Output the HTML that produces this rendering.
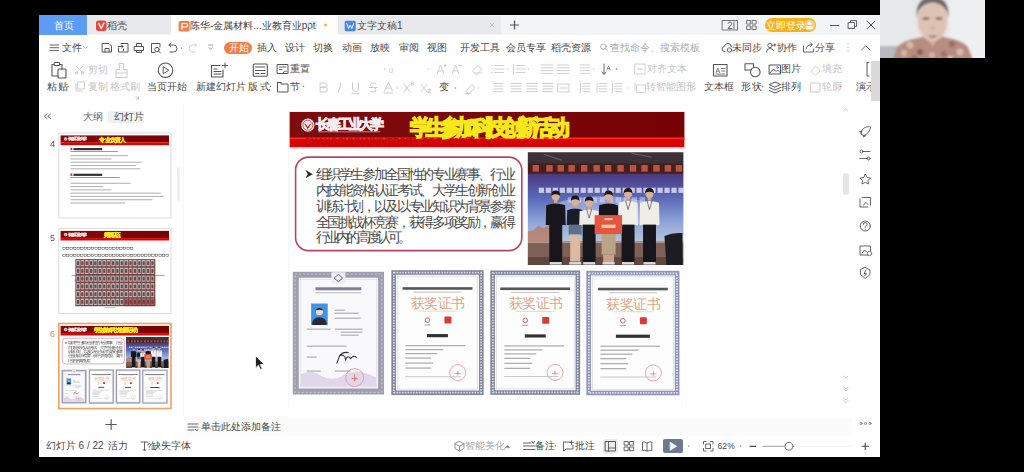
<!DOCTYPE html>
<html><head><meta charset="utf-8">
<style>
*{margin:0;padding:0;box-sizing:border-box}
html,body{width:1024px;height:472px;overflow:hidden;background:#000}
body{position:relative;font-family:"Liberation Sans",sans-serif;color:#444}
.a{position:absolute}
.t{position:absolute;white-space:nowrap;text-align:justify;text-align-last:justify;line-height:1}
body>div>svg,.tsvg{position:absolute;left:0;top:0;overflow:visible}
</style></head><body><div id="root" class="a" style="left:0;top:0;width:1024px;height:472px;filter:blur(0.6px)">

<div class="a" style="left:880px;top:0;width:105px;height:58px;background:#eceef0;overflow:hidden">
<svg width="105" height="58" viewBox="0 0 105 58">
<defs><filter id="bl" x="-20%" y="-20%" width="140%" height="140%"><feGaussianBlur stdDeviation="1.3"/></filter></defs>
<g filter="url(#bl)">
<rect x="-5" y="-5" width="115" height="68" fill="#e6e8ea"/>
<rect x="70" y="-5" width="40" height="68" fill="#eff0f1"/>
<rect x="-5" y="46" width="28" height="20" fill="#b7bbc0"/>
<rect x="45" y="33" width="15" height="14" fill="#d2ab9c"/>
<path d="M12 62 L17 47 Q24 40 38 38 L45 36 L52.5 47 L60 36 L68 38 Q82 40 88 47 L94 62 Z" fill="#b78d80"/>
<g fill-opacity="0.9">
<circle cx="30" cy="45" r="3.2" fill="#dcc0b0"/><circle cx="40" cy="52" r="3" fill="#8a5a50"/><circle cx="24" cy="53" r="3" fill="#d9bba8"/>
<circle cx="72" cy="44" r="3" fill="#9a6658"/><circle cx="80" cy="52" r="3.4" fill="#dcc1b2"/><circle cx="64" cy="54" r="3" fill="#a36a5c"/>
<circle cx="52" cy="55" r="3" fill="#d7b7a4"/><circle cx="34" cy="58" r="3" fill="#a06c60"/><circle cx="70" cy="58" r="2.5" fill="#e0c8bb"/>
</g>
<ellipse cx="52.5" cy="20" rx="15" ry="21.5" fill="#dec3b5"/>
<path d="M36.5 18 Q35 -3 52.5 -3 Q70 -3 68.5 18 Q67 4 52.5 2.5 Q38 4 36.5 18Z" fill="#716b69"/>
<ellipse cx="46" cy="18.5" rx="3.6" ry="1.3" fill="#77625c"/>
<ellipse cx="59" cy="18.5" rx="3.6" ry="1.3" fill="#77625c"/>
<ellipse cx="52.5" cy="28" rx="2.5" ry="1.5" fill="#d0a898"/>
<ellipse cx="52.5" cy="36.5" rx="4.2" ry="1.4" fill="#b88279"/>
</g></svg></div>

<div class="a" style="left:39px;top:15px;width:841px;height:442px;background:#fff;"></div>
<div class="a" style="left:39px;top:15px;width:841px;height:20px;background:#f3f4f7;"></div>
<div class="a" style="left:39px;top:15px;width:48px;height:20px;background:#5c9cf6;"></div>
<div class="a" style="left:87px;top:15px;width:84px;height:19px;background:#e8e9ec;"></div>
<div class="a" style="left:171px;top:15px;width:167px;height:20px;background:#fff;"></div>
<div class="a" style="left:338px;top:16px;width:163px;height:18px;background:#e8e9ec;"></div>
<div class="t" style="left:54.0px;top:21.2px;width:18.0px;font-size:10px;color:#fff;font-weight:normal;">首页</div>
<div class="t" style="left:107.0px;top:21.2px;width:19.0px;font-size:10px;color:#484848;font-weight:normal;">稻壳</div>
<div class="t" style="left:190.0px;top:21.2px;width:106.0px;font-size:10px;color:#444;font-weight:normal;">陈华-金属材料...业教育业ppt</div>
<div class="t" style="left:357.0px;top:21.2px;width:38.0px;font-size:10px;color:#484848;font-weight:normal;">文字文稿1</div>
<div class="a" style="left:764.5px;top:17.8px;width:51.5px;height:14.6px;background:#f6b21b;border-radius:8px"></div>
<div class="t" style="left:766.0px;top:21.2px;width:33.0px;font-size:10px;color:#fff;font-weight:normal;">立即登录</div>
<div class="t" style="left:62.4px;top:43.2px;width:17.6px;font-size:10px;color:#444;font-weight:normal;">文件</div>
<div class="a" style="left:224px;top:41.5px;width:28px;height:12.5px;background:#ef7f48;border-radius:6.5px"></div>
<div class="t" style="left:229.0px;top:43.2px;width:19.0px;font-size:10px;color:#fff;font-weight:normal;">开始</div>
<div class="t" style="left:257.0px;top:43.2px;width:19.0px;font-size:10px;color:#484848;font-weight:normal;">插入</div>
<div class="t" style="left:285.0px;top:43.2px;width:19.0px;font-size:10px;color:#484848;font-weight:normal;">设计</div>
<div class="t" style="left:313.0px;top:43.2px;width:19.0px;font-size:10px;color:#484848;font-weight:normal;">切换</div>
<div class="t" style="left:342.0px;top:43.2px;width:19.0px;font-size:10px;color:#484848;font-weight:normal;">动画</div>
<div class="t" style="left:370.0px;top:43.2px;width:19.0px;font-size:10px;color:#484848;font-weight:normal;">放映</div>
<div class="t" style="left:399.0px;top:43.2px;width:19.0px;font-size:10px;color:#484848;font-weight:normal;">审阅</div>
<div class="t" style="left:427.0px;top:43.2px;width:19.0px;font-size:10px;color:#484848;font-weight:normal;">视图</div>
<div class="t" style="left:459.7px;top:43.2px;width:33.3px;font-size:10px;color:#484848;font-weight:normal;">开发工具</div>
<div class="t" style="left:506.0px;top:43.2px;width:33.6px;font-size:10px;color:#484848;font-weight:normal;">会员专享</div>
<div class="t" style="left:550.5px;top:43.2px;width:34.0px;font-size:10px;color:#484848;font-weight:normal;">稻壳资源</div>
<div class="t" style="left:610.0px;top:43.2px;width:75.0px;font-size:10px;color:#aaa;font-weight:normal;">查找命令、搜索模板</div>
<div class="t" style="left:732.0px;top:43.2px;width:28.0px;font-size:10px;color:#484848;font-weight:normal;">未同步</div>
<div class="t" style="left:777.0px;top:43.2px;width:19.0px;font-size:10px;color:#484848;font-weight:normal;">协作</div>
<div class="t" style="left:815.0px;top:43.2px;width:17.0px;font-size:10px;color:#484848;font-weight:normal;">分享</div>
<div class="t" style="left:47.0px;top:82.2px;width:21.0px;font-size:10px;color:#484848;font-weight:normal;">粘贴</div>
<div class="t" style="left:88.0px;top:65.2px;width:18.0px;font-size:10px;color:#c2c2c2;font-weight:normal;">剪切</div>
<div class="t" style="left:88.0px;top:82.2px;width:18.0px;font-size:10px;color:#c2c2c2;font-weight:normal;">复制</div>
<div class="t" style="left:110.0px;top:82.2px;width:27.0px;font-size:10px;color:#c2c2c2;font-weight:normal;">格式刷</div>
<div class="t" style="left:147.0px;top:82.2px;width:36.0px;font-size:10px;color:#484848;font-weight:normal;">当页开始</div>
<div class="t" style="left:196.0px;top:82.2px;width:41.0px;font-size:10px;color:#484848;font-weight:normal;">新建幻灯片</div>
<div class="t" style="left:248.0px;top:82.2px;width:22.0px;font-size:10px;color:#484848;font-weight:normal;">版式</div>
<div class="t" style="left:290.0px;top:64.2px;width:18.0px;font-size:10px;color:#484848;font-weight:normal;">重置</div>
<div class="t" style="left:290.0px;top:82.2px;width:10.0px;font-size:10px;color:#484848;font-weight:normal;">节</div>
<div class="t" style="left:439.0px;top:82.2px;width:10.0px;font-size:10px;color:#444;font-weight:normal;">变</div>
<div class="t" style="left:646.5px;top:64.2px;width:36.0px;font-size:10px;color:#c4c4c4;font-weight:normal;">对齐文本</div>
<div class="t" style="left:646.0px;top:82.2px;width:44.0px;font-size:10px;color:#c4c4c4;font-weight:normal;">转智能图形</div>
<div class="t" style="left:704.0px;top:82.2px;width:27.0px;font-size:10px;color:#484848;font-weight:normal;">文本框</div>
<div class="t" style="left:741.0px;top:82.2px;width:21.0px;font-size:10px;color:#484848;font-weight:normal;">形状</div>
<div class="t" style="left:781.0px;top:64.2px;width:18.0px;font-size:10px;color:#484848;font-weight:normal;">图片</div>
<div class="t" style="left:781.0px;top:82.2px;width:18.0px;font-size:10px;color:#484848;font-weight:normal;">排列</div>
<div class="t" style="left:822.0px;top:64.2px;width:18.0px;font-size:10px;color:#c4c4c4;font-weight:normal;">填充</div>
<div class="t" style="left:822.0px;top:82.2px;width:18.0px;font-size:10px;color:#c4c4c4;font-weight:normal;">轮廓</div>
<div class="t" style="left:856.0px;top:82.2px;width:16.0px;font-size:10px;color:#484848;font-weight:normal;">演示</div>
<div class="a" style="left:183px;top:104px;width:0.8px;height:312px;background:#f6f6f6;"></div>
<div class="a" style="left:871px;top:60.6px;width:9px;height:40px;background:#dadada;"></div>
<div class="a" style="left:107.75px;top:110.8px;width:36px;height:11.8px;background:#edf1f6;border-radius:2px"></div>
<div class="t" style="left:83.0px;top:112.2px;width:18.0px;font-size:10px;color:#666;font-weight:normal;">大纲</div>
<div class="t" style="left:114.0px;top:112.2px;width:25.0px;font-size:10px;color:#484848;font-weight:normal;">幻灯片</div>
<div class="a" style="left:185px;top:416.5px;width:667px;height:19.5px;background:#fbfbfb;"></div>
<div class="t" style="left:201.0px;top:422.2px;width:72.4px;font-size:10px;color:#484848;font-weight:normal;">单击此处添加备注</div>
<div class="t" style="left:45.8px;top:441.2px;width:50.7px;font-size:10px;color:#484848;font-weight:normal;">幻灯片 6 / 22</div>
<div class="t" style="left:107.5px;top:441.2px;width:18.5px;font-size:10px;color:#484848;font-weight:normal;">活力</div>
<div class="t" style="left:151.0px;top:441.2px;width:34.5px;font-size:10px;color:#484848;font-weight:normal;">缺失字体</div>
<div class="t" style="left:465.0px;top:441.2px;width:36.0px;font-size:10px;color:#aaa;font-weight:normal;">智能美化</div>
<div class="t" style="left:535.0px;top:441.2px;width:19.0px;font-size:10px;color:#484848;font-weight:normal;">备注</div>
<div class="t" style="left:575.0px;top:441.2px;width:19.0px;font-size:10px;color:#484848;font-weight:normal;">批注</div>
<div class="a" style="left:603px;top:439px;width:15px;height:14.5px;background:#e9ecf1;border-radius:2px"></div>
<div class="a" style="left:663.3px;top:439px;width:19.7px;height:14.4px;background:#6f7a92;border-radius:2px"></div>
<div class="t" style="left:717.6px;top:442.4px;width:18.8px;font-size:8.6px;color:#484848;font-weight:normal;">62%</div>
<svg width="1024" height="472" viewBox="0 0 1024 472" style="left:0;top:0">
<g fill="none" stroke-linecap="round" stroke-linejoin="round">
<rect x="96" y="20.5" width="10.5" height="10.5" rx="2.5" fill="#e5463d" stroke="none"/>
<path d="M98.8 23.5 L101.2 28.5 L104 23" stroke="#fff" stroke-width="1.4"/>
<rect x="178.6" y="21" width="11" height="10.5" rx="1.5" fill="#e9824f" stroke="none"/>
<path d="M182 29 V23.5 H186 Q187.5 23.5 187.5 25.3 Q187.5 27 186 27 H182" stroke="#fff" stroke-width="1.2"/>
<path d="M309 22 H316 V27 L312.5 29.5 L309 27 Z" stroke="#d5d5d5" stroke-width="0.9"/>
<circle cx="325.5" cy="25" r="1.6" fill="#e6c148" stroke="none"/>
<rect x="344.7" y="20.8" width="11" height="10.5" rx="1.5" fill="#4585ec" stroke="none"/>
<path d="M346.8 23.5 L348.6 28.5 L350.2 25 L351.8 28.5 L353.6 23.5" stroke="#fff" stroke-width="1"/>
<path d="M490 23 L494 27 M494 23 L490 27" stroke="#c0c0c0" stroke-width="0.9"/>
<path d="M510.5 25 H518.5 M514.5 21 V29" stroke="#555" stroke-width="1.2"/>
<rect x="722.5" y="20.5" width="15" height="9.5" stroke="#666" stroke-width="0.9"/>
<path d="M728 23.5 Q728.5 22 730 22 Q731.7 22 731.7 23.6 Q731.7 25 728 28.5 H732" stroke="#555" stroke-width="0.9"/>
<path d="M734 22 V28.5" stroke="#555" stroke-width="0.9"/>
<rect x="747" y="20.5" width="3.6" height="3.6" stroke="#666" stroke-width="0.9"/>
<rect x="752.5" y="20.5" width="3.6" height="3.6" stroke="#666" stroke-width="0.9"/>
<rect x="747" y="26" width="3.6" height="3.6" stroke="#666" stroke-width="0.9"/>
<rect x="752.5" y="26" width="3.6" height="3.6" stroke="#666" stroke-width="0.9"/>
<circle cx="809.5" cy="25.1" r="5.6" fill="#f8cf78" stroke="none"/>
<circle cx="809.5" cy="23.3" r="2" fill="#fff" stroke="none"/>
<path d="M805.8 29 Q806 26 809.5 26 Q813 26 813.2 29 Z" fill="#fff" stroke="none"/>
<path d="M830.5 25.5 H838.5" stroke="#555" stroke-width="1"/>
<rect x="848.5" y="22.5" width="6" height="6" stroke="#555" stroke-width="0.9"/>
<path d="M850.5 22.5 V20.5 H856.5 V26.5 H854.5" stroke="#555" stroke-width="0.9"/>
<path d="M867 21 L875 29 M875 21 L867 29" stroke="#555" stroke-width="1"/>
<path d="M50 45 H58.5 M50 47.7 H58.5 M50 50.4 H58.5" stroke="#555" stroke-width="0.9"/>
<path d="M83.5 46.5 L85.5 48.5 L87.5 46.5" stroke="#aaa" stroke-width="0.8"/>
<path d="M102.5 43.5 H109 L111.5 46 V52 H102.5 Z M105 52 V48.5 H109 V52" stroke="#555" stroke-width="1"/>
<path d="M121 43.5 H128 V52 H118.5 V48 M118 46.5 H123 M121.5 45 L123 46.5 L121.5 48 M123.5 49 V50.5" stroke="#555" stroke-width="1"/>
<path d="M136.5 46.5 V43.5 H141.5 V46.5 M134.5 46.5 H143.5 V50.5 H134.5 Z M136.5 50.5 V52.5 H141.5 V50.5" stroke="#555" stroke-width="1"/>
<path d="M160 47 V43.5 H151.5 V52.5 H155" stroke="#555" stroke-width="1"/><circle cx="157" cy="49.5" r="2.2" stroke="#555" stroke-width="1"/><path d="M158.6 51.1 L160.5 53" stroke="#555" stroke-width="1"/>
<path d="M169 45 H173.5 Q177 45 177 48.5 Q177 52 173.5 52 H170 M171 43 L169 45 L171 47" stroke="#555" stroke-width="1"/>
<circle cx="181.5" cy="48" r="0.7" fill="#777" stroke="none"/>
<path d="M196.5 45 H192 Q189 45 189 48.5 Q189 52 192 52 H195 M194.5 43 L196.5 45 L194.5 47" stroke="#d0d0d0" stroke-width="1"/>
<path d="M208.5 45 H213 M209 47.5 L210.8 49.5 L212.6 47.5" stroke="#888" stroke-width="0.8"/>
<circle cx="603.5" cy="46.7" r="2.8" stroke="#aaa" stroke-width="0.9"/><path d="M605.5 48.8 L607.3 50.6" stroke="#aaa" stroke-width="0.9"/>
<path d="M725 51.5 Q722 51.5 722 49 Q722 46.8 724.3 46.6 Q725 43.5 728 43.5 Q731 43.5 731.5 46.8" stroke="#555" stroke-width="1"/><circle cx="729.5" cy="50" r="2.2" stroke="#555" stroke-width="0.9"/>
<circle cx="770" cy="45.5" r="2.2" stroke="#555" stroke-width="0.9"/><path d="M766.5 52 Q766.5 48.5 770 48.5 Q772.5 48.5 773.5 50.5 M773.5 45 H776 M774.8 43.8 V46.2" stroke="#555" stroke-width="0.9"/>
<path d="M803.5 46 V52 H813.5 V49 M806 49 Q807 44.5 812 44.5 M810.5 42.8 L812.5 44.5 L810.5 46.3" stroke="#555" stroke-width="0.9"/>
<circle cx="848" cy="44" r="0.7" fill="#bbb" stroke="none"/><circle cx="848" cy="47.5" r="0.7" fill="#bbb" stroke="none"/><circle cx="848" cy="51" r="0.7" fill="#bbb" stroke="none"/>
<path d="M861.5 50 L865.7 45.8 L870 50" stroke="#666" stroke-width="1"/>
<path d="M54 64.5 H52 V76 H58 M60 64.5 H62 V69" stroke="#555" stroke-width="1.1"/><rect x="54.5" y="62.5" width="5" height="3" stroke="#555" stroke-width="1"/><rect x="58" y="69" width="8" height="9" rx="1" stroke="#555" stroke-width="1.1"/>
<path d="M76 66 L83 73 M83 66 L76 73" stroke="#ccc" stroke-width="1"/><circle cx="76.5" cy="73" r="1.3" stroke="#ccc"/><circle cx="82.5" cy="73" r="1.3" stroke="#ccc"/>
<rect x="78" y="82" width="6.5" height="7" stroke="#ccc" stroke-width="1"/><path d="M76 84 V91 H82" stroke="#ccc" stroke-width="1"/>
<path d="M119.5 63.5 H123.5 V69.5 H127 V73 H116 V69.5 H119.5 Z M116 73 V77.5 H127 V73" stroke="#ccc" stroke-width="1"/>
<path d="M136 96.5 L138.5 99 M138.5 97 V99 H136.5" stroke="#bbb" stroke-width="0.8"/>
<circle cx="165.5" cy="70.2" r="7.2" stroke="#555" stroke-width="1.1"/><path d="M163.5 66.8 L168.8 70.2 L163.5 73.6 Z" stroke="#555" stroke-width="1"/>
<path d="M223 70 V77 H211.5 V65.5 H220" stroke="#555" stroke-width="1.1"/><path d="M214 69 H217 M214 71.5 H221 M214 74 H221 M225 63 V68 M222.5 65.5 H227.5" stroke="#555" stroke-width="1"/>
<rect x="253.3" y="64" width="14" height="12.3" rx="1" stroke="#555" stroke-width="1.1"/><path d="M255.5 67 H265 M255.5 70.5 H265 M255.5 73.5 H259 M261 73.5 H265" stroke="#555" stroke-width="1"/>
<rect x="277.5" y="64.5" width="10.5" height="9" stroke="#555" stroke-width="1"/><path d="M279.5 67 H286 M279.5 69.5 H282" stroke="#555" stroke-width="0.9"/><path d="M283 73 Q283.5 70.5 286.5 71" stroke="#555" stroke-width="0.9"/>
<path d="M277.5 82.5 H281 M277.5 82.5 V92 H288 V84 H281 V82.5" stroke="#555" stroke-width="1"/>
<circle cx="384.5" cy="69" r="0.8" fill="#ccc" stroke="none"/>
<text x="389" y="72.5" font-size="8" fill="#ccc" stroke="none" font-family="Liberation Sans">0</text>
<circle cx="428.5" cy="69" r="0.8" fill="#ccc" stroke="none"/>
<path d="M437 74 L440.5 65 L444 74 M438.3 71 H442.7 M444 65.5 H446.5 M445.2 64.3 V66.7" stroke="#ccc" stroke-width="0.9"/>
<path d="M452 74 L455.5 65 L459 74 M453.3 71 H457.7 M459 65.5 H461.5" stroke="#ccc" stroke-width="0.9"/>
<path d="M476 74.5 L472.5 71 L478 65.5 L482 69.5 L477 74.5 Z M474.5 73 H482" stroke="#ccc" stroke-width="0.9"/>
<path d="M320.5 83 H324.5 Q327 83 327 85.3 Q327 87.3 324.5 87.3 H320.5 Z M320.5 87.3 H325 Q327.5 87.3 327.5 89.5 Q327.5 92 325 92 H320.5 Z" stroke="#ccc" stroke-width="1"/>
<path d="M341 83 L338.5 92" stroke="#ccc" stroke-width="1"/>
<path d="M352.5 83 V88.5 Q352.5 91.5 355.5 91.5 Q358.5 91.5 358.5 88.5 V83 M352 93.5 H359" stroke="#ccc" stroke-width="1"/>
<path d="M376 84 Q375 83 373 83 Q370.5 83 370.5 85 Q370.5 87 373 87.3 Q376 87.6 376 89.8 Q376 92 373 92 Q371 92 370 91 M369.5 87.5 H377" stroke="#ccc" stroke-width="1"/>
<path d="M384.5 91 L388.5 82.5 L392.5 91 M386 88 H391 M384 93 H393" stroke="#ccc" stroke-width="1"/><circle cx="397" cy="88" r="0.8" fill="#ccc" stroke="none"/>
<path d="M404 84 L410 92 M410 84 L404 92 M411 82 H413.5 V83.5 H411 V85 H413.5" stroke="#ccc" stroke-width="0.9"/>
<path d="M421 84 L427 92 M427 84 L421 92 M428 89.5 H430.5 V91 H428 V92.5 H430.5" stroke="#ccc" stroke-width="0.9"/>
<circle cx="455.5" cy="88" r="0.8" fill="#888" stroke="none"/>
<path d="M466 91 L472 84.5 L475 87.5 L469 93.5 Z M465 93.5 H470" stroke="#ccc" stroke-width="0.9"/><circle cx="478.5" cy="88" r="0.8" fill="#ccc" stroke="none"/>
<circle cx="492" cy="65.5" r="0.7" fill="#ccc" stroke="none"/><circle cx="492" cy="69" r="0.7" fill="#ccc" stroke="none"/><circle cx="492" cy="72.5" r="0.7" fill="#ccc" stroke="none"/><path d="M494.5 65.5 H503.5" stroke="#ccc" stroke-width="0.9"/><path d="M494.5 69.0 H503.5" stroke="#ccc" stroke-width="0.9"/><path d="M494.5 72.5 H503.5" stroke="#ccc" stroke-width="0.9"/>
<circle cx="507.5" cy="69" r="0.8" fill="#ccc" stroke="none"/>
<path d="M513.5 64.5 V74" stroke="#ccc" stroke-width="0.9"/><path d="M516 65.5 H525" stroke="#ccc" stroke-width="0.9"/><path d="M516 69.0 H525" stroke="#ccc" stroke-width="0.9"/><path d="M516 72.5 H525" stroke="#ccc" stroke-width="0.9"/>
<circle cx="528.5" cy="69" r="0.8" fill="#ccc" stroke="none"/>
<path d="M541 65.0 H553" stroke="#ccc" stroke-width="0.9"/><path d="M541 67.8 H553" stroke="#ccc" stroke-width="0.9"/><path d="M541 70.6 H553" stroke="#ccc" stroke-width="0.9"/><path d="M541 73.4 H553" stroke="#ccc" stroke-width="0.9"/>
<path d="M557 65.0 H569" stroke="#ccc" stroke-width="0.9"/><path d="M557 67.8 H569" stroke="#ccc" stroke-width="0.9"/><path d="M557 70.6 H569" stroke="#ccc" stroke-width="0.9"/><path d="M557 73.4 H569" stroke="#ccc" stroke-width="0.9"/>
<path d="M580 65.0 H590" stroke="#ccc" stroke-width="0.9"/><path d="M580 67.8 H590" stroke="#ccc" stroke-width="0.9"/><path d="M580 70.6 H590" stroke="#ccc" stroke-width="0.9"/><path d="M580 73.4 H590" stroke="#ccc" stroke-width="0.9"/>
<circle cx="593.5" cy="69" r="0.8" fill="#ccc" stroke="none"/>
<path d="M604 64 V74 M602 72 L604 74.5 L606 72" stroke="#555" stroke-width="0.9"/><text x="606.5" y="70" font-size="6" fill="#555" stroke="none" font-family="Liberation Sans">A</text><circle cx="616.5" cy="69" r="0.8" fill="#777" stroke="none"/>
<rect x="635" y="64" width="10" height="10" stroke="#ccc" stroke-width="0.9"/><path d="M637.5 69 H642.5" stroke="#ccc"/><circle cx="683.5" cy="69" r="0.8" fill="#ccc" stroke="none"/>
<path d="M494 83.5 H503" stroke="#ccc" stroke-width="0.9"/><path d="M494 86.2 H503" stroke="#ccc" stroke-width="0.9"/><path d="M494 88.9 H503" stroke="#ccc" stroke-width="0.9"/><path d="M494 91.6 H503" stroke="#ccc" stroke-width="0.9"/>
<path d="M511 83.5 H521" stroke="#ccc" stroke-width="0.9"/><path d="M511 86.2 H521" stroke="#ccc" stroke-width="0.9"/><path d="M511 88.9 H521" stroke="#ccc" stroke-width="0.9"/><path d="M511 91.6 H521" stroke="#ccc" stroke-width="0.9"/>
<path d="M527 83.5 H537" stroke="#ccc" stroke-width="0.9"/><path d="M527 86.2 H537" stroke="#ccc" stroke-width="0.9"/><path d="M527 88.9 H537" stroke="#ccc" stroke-width="0.9"/><path d="M527 91.6 H537" stroke="#ccc" stroke-width="0.9"/>
<path d="M543 83.5 H552.5" stroke="#c4c4c4" stroke-width="0.9"/><path d="M543 86.2 H552.5" stroke="#c4c4c4" stroke-width="0.9"/><path d="M543 88.9 H552.5" stroke="#c4c4c4" stroke-width="0.9"/><path d="M543 91.6 H552.5" stroke="#c4c4c4" stroke-width="0.9"/>
<rect x="558" y="84" width="11" height="8" stroke="#ccc" stroke-width="0.9"/><path d="M560 88 H567" stroke="#ccc"/>
<path d="M583 83.5 H590" stroke="#ccc" stroke-width="0.9"/><path d="M583 86.2 H590" stroke="#ccc" stroke-width="0.9"/><path d="M583 88.9 H590" stroke="#ccc" stroke-width="0.9"/><path d="M583 91.6 H590" stroke="#ccc" stroke-width="0.9"/>
<path d="M580.5 83 V92.5" stroke="#ccc" stroke-width="0.9"/>
<path d="M599 83.5 H607" stroke="#ccc" stroke-width="0.9"/><path d="M599 86.2 H607" stroke="#ccc" stroke-width="0.9"/><path d="M599 88.9 H607" stroke="#ccc" stroke-width="0.9"/><path d="M599 91.6 H607" stroke="#ccc" stroke-width="0.9"/>
<path d="M597 83 V92.5" stroke="#ccc" stroke-width="0.9"/>
<path d="M615 83.5 H622" stroke="#ccc" stroke-width="0.9"/><path d="M615 86.2 H622" stroke="#ccc" stroke-width="0.9"/><path d="M615 88.9 H622" stroke="#ccc" stroke-width="0.9"/><path d="M615 91.6 H622" stroke="#ccc" stroke-width="0.9"/>
<path d="M612.5 83 V92.5" stroke="#ccc" stroke-width="0.9"/><circle cx="627.5" cy="88" r="0.8" fill="#ccc" stroke="none"/>
<rect x="637" y="85" width="8.5" height="7.5" stroke="#ccc" stroke-width="0.9"/><path d="M635 83 V90" stroke="#ccc" stroke-width="0.9"/><circle cx="692.5" cy="88" r="0.8" fill="#ccc" stroke="none"/>
<rect x="713.5" y="64.5" width="13.5" height="11.5" stroke="#555" stroke-width="1.1"/><text x="715.5" y="72.5" font-size="7" fill="#555" stroke="none" font-family="Liberation Sans">A</text><path d="M721.5 68.5 H725 M721.5 71 H725 M716 74 H725" stroke="#555" stroke-width="0.8"/>
<path d="M750.5 70 H745 V63.8 H753.5 V67" stroke="#555" stroke-width="1.1"/><circle cx="755.3" cy="72" r="4.8" stroke="#555" stroke-width="1.1"/>
<rect x="769.5" y="65" width="11" height="9" stroke="#555" stroke-width="1"/><path d="M770 73 L773.5 69 L776 71.5 L777.5 70 L780 72.5" stroke="#555" stroke-width="0.9"/><circle cx="777.5" cy="67.5" r="0.9" stroke="#555" stroke-width="0.7"/>
<path d="M811 71 L815.5 66 L820 71 L815.5 75 Z" stroke="#ccc" stroke-width="0.9"/>
<path d="M769.5 84.5 L775 82 L780.5 84.5 L775 87 Z M769.5 87.5 L775 90 L780.5 87.5 M769.5 90.5 L775 93 L780.5 90.5" stroke="#555" stroke-width="1"/>
<rect x="811" y="83" width="9" height="9" stroke="#ccc" stroke-width="1"/>
<path d="M869 62.5 H867 V76 H869" stroke="#555" stroke-width="1"/>
<circle cx="68" cy="86.5" r="0.8" fill="#888" stroke="none"/>
<circle cx="183.5" cy="86.5" r="0.8" fill="#888" stroke="none"/>
<circle cx="238.5" cy="86.5" r="0.8" fill="#888" stroke="none"/>
<circle cx="270.5" cy="86.5" r="0.8" fill="#888" stroke="none"/>
<circle cx="303.5" cy="86.5" r="0.8" fill="#888" stroke="none"/>
<circle cx="731.5" cy="86.5" r="0.8" fill="#888" stroke="none"/>
<circle cx="762.5" cy="86.5" r="0.8" fill="#888" stroke="none"/>
<circle cx="799.5" cy="86.5" r="0.8" fill="#888" stroke="none"/>
<circle cx="840.5" cy="86.5" r="0.8" fill="#888" stroke="none"/>
<circle cx="799.5" cy="68.5" r="0.8" fill="#aaa" stroke="none"/>
<circle cx="840.5" cy="68.5" r="0.8" fill="#aaa" stroke="none"/>
<path d="M47 114 L44.3 116.3 L47 118.6 M50.5 114 L47.8 116.3 L50.5 118.6" stroke="#555" stroke-width="0.9"/>
<path d="M106 424.5 H116.3 M111.15 419.5 V429.5" stroke="#555" stroke-width="1.1"/>
<rect x="177" y="167" width="3" height="34" rx="1.5" fill="#eeeeee" stroke="none"/>
<path d="M843.5 111 L845.5 108.5 L847.5 111" stroke="#bbb" stroke-width="0.8"/>
<rect x="843" y="173" width="6" height="22" rx="3" fill="#e5e5e5" stroke="none"/>
<path d="M844 376 L846 378 L848 376" stroke="#bbb" stroke-width="0.7"/><path d="M844 387 L846 389 L848 387 M844 389 L846 391 L848 389" stroke="#bbb" stroke-width="0.7"/><path d="M844 398 L846 400 L848 398 M844 400.5 L846 402.5 L848 400.5" stroke="#bbb" stroke-width="0.7"/>
<path d="M861 134 Q861 129 866 127 Q871 126 870.5 127.5 Q869.5 133 864.5 135.5 Z M862 131 L859.5 131.5 L861 133.5 M864 135 L863.5 137 L866 135.5" stroke="#555" stroke-width="0.9"/>
<path d="M862.5 151.5 H870 M860 158.5 H867.5" stroke="#555" stroke-width="0.9"/><circle cx="861.5" cy="151.5" r="1.5" stroke="#555" stroke-width="0.9"/><circle cx="868.5" cy="158.5" r="1.5" stroke="#555" stroke-width="0.9"/>
<path d="M865.3 174.3 L867 177.5 L870.5 178 L868 180.5 L868.5 184 L865.3 182.3 L862 184 L862.6 180.5 L860 178 L863.6 177.5 Z" stroke="#555" stroke-width="0.9"/>
<path d="M860 199 V207 H868 M862 197.5 H870.5 V205 M863.5 205 L866 202.5 L868 204.5" stroke="#555" stroke-width="0.9"/>
<circle cx="865.3" cy="226" r="5" stroke="#555" stroke-width="0.9"/><path d="M863.5 224.5 Q863.5 222.5 865.3 222.5 Q867.2 222.5 867.2 224.3 Q867.2 225.8 865.3 226.5 V227.5 M865.3 229.2 V229.4" stroke="#555" stroke-width="0.9"/>
<path d="M868 255 H860 V246 H870.5 V251 M862 253 L864.5 250 L866.5 252" stroke="#555" stroke-width="0.9"/><circle cx="869.5" cy="253.5" r="2.2" stroke="#555" stroke-width="0.8"/>
<path d="M865.3 267.5 L870 270 V274.5 L865.3 278.5 L860.5 274.5 V270 Z M866 270 L864 273.5 H866.5 L864.5 276" stroke="#555" stroke-width="0.9"/>
<circle cx="861" cy="423.5" r="1.1" stroke="#777" stroke-width="0.8"/><circle cx="865.5" cy="423.5" r="1.1" stroke="#777" stroke-width="0.8"/><circle cx="870" cy="423.5" r="1.1" stroke="#777" stroke-width="0.8"/>
<path d="M188 424 H198 M188 427 H198 M188 430 H194 M195.5 429.5 L196.8 431 L198 429.5" stroke="#555" stroke-width="0.9"/>
<path d="M141 442 H148 M144.5 442 V450 M143 450 H146" stroke="#555" stroke-width="0.9"/><path d="M148 445 Q148 443.5 149.3 443.5 Q150.6 443.5 150.6 444.8 Q150.6 446 149.3 446.5 V447.5 M149.3 449.3 V449.5" stroke="#555" stroke-width="0.8"/>
<path d="M459.5 441.5 L464 443.8 V448.5 L459.5 451 L455 448.5 V443.8 Z M455 443.8 L459.5 446.2 L464 443.8 M459.5 446.2 V451" stroke="#888" stroke-width="0.9"/>
<path d="M505.5 447.5 L507.5 445.5 L509.5 447.5 Z" fill="#777" stroke="#777" stroke-width="0.5"/>
<path d="M523.5 443 H531 M523.5 446 H535 M523.5 449.5 H535 M532 441.5 L533.3 443.5 L534.6 441.5" stroke="#555" stroke-width="0.9"/><circle cx="555.5" cy="446" r="0.8" fill="#888" stroke="none"/>
<path d="M570 442 H563.5 V451 L566 449 H573 V445 M571.5 440.5 V444.5 M569.5 442.5 H573.5" stroke="#555" stroke-width="0.9"/>
<rect x="605.5" y="441.5" width="10" height="9.5" stroke="#555" stroke-width="1"/><path d="M608.5 441.5 V451 M608.5 448 H615.5" stroke="#555" stroke-width="0.9"/>
<rect x="624.5" y="441.5" width="3.7" height="3.7" stroke="#555" stroke-width="0.9"/>
<rect x="630" y="441.5" width="3.7" height="3.7" stroke="#555" stroke-width="0.9"/>
<rect x="624.5" y="447" width="3.7" height="3.7" stroke="#555" stroke-width="0.9"/>
<rect x="630" y="447" width="3.7" height="3.7" stroke="#555" stroke-width="0.9"/>
<path d="M647 443 Q644.5 441.5 642.5 442 V450.5 Q644.5 450 647 451 Q649.5 450 651.8 450.5 V442 Q649.5 441.5 647 443 V451" stroke="#555" stroke-width="0.9"/>
<path d="M670.5 442.5 L676.5 446.3 L670.5 450 Z" fill="#fff" stroke="#fff" stroke-width="0.8"/><circle cx="688.5" cy="446" r="0.8" fill="#888" stroke="none"/>
<path d="M703.5 444 V441.5 H706 M710.5 441.5 H713 V444 M713 448.5 V451 H710.5 M706 451 H703.5 V448.5" stroke="#555" stroke-width="0.9"/><rect x="706" y="444" width="4.5" height="4.5" stroke="#555" stroke-width="0.9"/>
<circle cx="740.5" cy="446" r="0.8" fill="#888" stroke="none"/><path d="M750 446.3 H755.5" stroke="#444" stroke-width="1.2"/>
<path d="M763 446.3 H785" stroke="#888" stroke-width="0.8"/><path d="M793 446.3 H850" stroke="#eee" stroke-width="0.8"/><circle cx="789" cy="446.3" r="4" fill="#fff" stroke="#666" stroke-width="0.9"/>
<path d="M862 446.3 H868.5 M865.25 443 V449.5" stroke="#444" stroke-width="1.1"/>
<text x="50" y="146.5" font-size="9" fill="#555" stroke="none" font-family="Liberation Sans">4</text>
<text x="50" y="240.5" font-size="9" fill="#555" stroke="none" font-family="Liberation Sans">5</text>
<text x="50" y="336.5" font-size="9" fill="#e98a4e" stroke="none" font-family="Liberation Sans">6</text>
<path d="M255.5 356 V368 L258.3 365.3 L260.5 369.5 L262.2 368.7 L260.2 364.6 L264 364.4 Z" fill="#222" stroke="#fff" stroke-width="0.8"/>
</g></svg>
<svg width="1024" height="472" viewBox="0 0 1024 472" style="left:0;top:0">
<defs><linearGradient id="hdr" x1="0" x2="1" y1="0" y2="0"><stop offset="0" stop-color="#7e0b0d"/><stop offset="1" stop-color="#760204"/></linearGradient>
<filter id="pb" x="-5%" y="-5%" width="110%" height="110%"><feGaussianBlur stdDeviation="0.6"/></filter><linearGradient id="bd" x1="0" x2="0" y1="0" y2="1"><stop offset="0" stop-color="#4a3a80"/><stop offset="0.35" stop-color="#5a68b8"/><stop offset="0.7" stop-color="#8ea4d8"/><stop offset="1" stop-color="#b8c6dc"/></linearGradient>
<g id="s6">
<rect x="0" y="0" width="396" height="297" fill="#fff"/>
<rect x="0" y="0" width="396" height="26" fill="url(#hdr)"/>
<rect x="0" y="25.7" width="396" height="9.8" fill="#d60606"/>
<rect x="0" y="25.7" width="396" height="1.6" fill="#ff2a1a"/>
<rect x="0" y="35.3" width="396" height="1.4" fill="#f2c0c0"/>
<text x="15" y="34.5" font-size="10.5" fill="#c20808" font-weight="bold" textLength="196" lengthAdjust="spacingAndGlyphs" font-family="Liberation Sans">CHANGCHUN  UNIVERSITY  OF  TECHNOLOGY</text>
<circle cx="18.5" cy="13.2" r="6.6" fill="#f3e6e0"/><circle cx="18.5" cy="13.2" r="5" fill="none" stroke="#8a1a1a" stroke-width="0.6"/><path d="M14.5 11 L18.5 17 L22.5 11 L20.5 12.5 L18.5 15 L16.5 12.5 Z" fill="#9a0f0f"/>
<text x="27.12" y="17.00" font-size="13.77" fill="#f4ecec" font-weight="bold" textLength="67.63" lengthAdjust="spacing" font-family="Liberation Sans" stroke="#f4ecec" stroke-width="0.9">长春工业大学</text>
<rect x="29" y="19.5" width="62" height="0.8" fill="#d9a5a5"/>
<text x="120.63" y="23.00" font-size="21.74" fill="#f7e81a" font-weight="bold" textLength="160.52" lengthAdjust="spacing" font-family="Liberation Sans" stroke="#f7e81a" stroke-width="1.3">学生参加科技创新活动</text>
<rect x="6.2" y="45.2" width="226.8" height="93.8" rx="13" fill="#fff" stroke="#b4466a" stroke-width="1.6"/>
<path d="M16 58 L23.5 62.5 L16 66.5 L18.5 62.5 Z" fill="#2a2a2a"/>
<text x="26.25" y="67.30" font-size="14.49" fill="#4a4a4a" font-weight="normal" textLength="200.65" lengthAdjust="spacing" font-family="Liberation Sans" >组织学生参加全国性的专业赛事、行业</text>
<text x="26.25" y="83.10" font-size="14.49" fill="#4a4a4a" font-weight="normal" textLength="200.65" lengthAdjust="spacing" font-family="Liberation Sans" >内技能资格认证考试、大学生创新创业</text>
<text x="26.25" y="99.00" font-size="14.49" fill="#4a4a4a" font-weight="normal" textLength="200.65" lengthAdjust="spacing" font-family="Liberation Sans" >训练计划，以及以专业知识为背景参赛</text>
<text x="26.25" y="114.80" font-size="14.49" fill="#4a4a4a" font-weight="normal" textLength="200.65" lengthAdjust="spacing" font-family="Liberation Sans" >全国挑战杯竞赛，获得多项奖励，赢得</text>
<text x="26.25" y="130.70" font-size="14.49" fill="#4a4a4a" font-weight="normal" textLength="96.65" lengthAdjust="spacing" font-family="Liberation Sans" >行业内的高度认可。</text>
<g transform="translate(239,40.4)">
<svg x="0" y="0" width="156" height="113.1" overflow="hidden"><g filter="url(#pb)">
<rect x="-2" y="-2" width="160" height="117.1" fill="#3b3035"/>
<rect x="-2" y="-2" width="159" height="13.5" fill="#3a3234"/><path d="M16 2 L34 8 M104 1 L124 5" stroke="#6a6060" stroke-width="1.2"/>
<rect x="-2" y="11" width="159" height="10.5" fill="#4a1e1c"/>
<rect x="4.8" y="12.8" width="6.4" height="6.6" fill="#c86248" opacity="0.85"/>
<rect x="18.5" y="12.8" width="6.4" height="6.6" fill="#c86248" opacity="0.85"/>
<rect x="29.8" y="12.8" width="6.4" height="6.6" fill="#c86248" opacity="0.85"/>
<rect x="40.8" y="12.8" width="6.4" height="6.6" fill="#c86248" opacity="0.85"/>
<rect x="53.3" y="12.8" width="6.4" height="6.6" fill="#c86248" opacity="0.85"/>
<rect x="65.8" y="12.8" width="6.4" height="6.6" fill="#c86248" opacity="0.85"/>
<rect x="77.3" y="12.8" width="6.4" height="6.6" fill="#c86248" opacity="0.85"/>
<rect x="89.8" y="12.8" width="6.4" height="6.6" fill="#c86248" opacity="0.85"/>
<rect x="102.3" y="12.8" width="6.4" height="6.6" fill="#c86248" opacity="0.85"/>
<rect x="113.8" y="12.8" width="6.4" height="6.6" fill="#c86248" opacity="0.85"/>
<rect x="125.8" y="12.8" width="6.4" height="6.6" fill="#c86248" opacity="0.85"/>
<rect x="137.3" y="12.8" width="6.4" height="6.6" fill="#c86248" opacity="0.85"/>
<rect x="148.3" y="12.8" width="6.4" height="6.6" fill="#c86248" opacity="0.85"/>
<rect x="-2" y="21.5" width="159" height="69" fill="url(#bd)"/>
<ellipse cx="75" cy="60" rx="55" ry="16" fill="#c8d0f0" opacity="0.45"/>
<rect x="11" y="35.5" width="5.2" height="5.2" fill="#eef0fa" opacity="0.75"/>
<rect x="18" y="35.5" width="5.2" height="5.2" fill="#eef0fa" opacity="0.75"/>
<rect x="25" y="35.5" width="5.2" height="5.2" fill="#eef0fa" opacity="0.75"/>
<rect x="32" y="35.5" width="5.2" height="5.2" fill="#eef0fa" opacity="0.75"/>
<rect x="39" y="35.5" width="5.2" height="5.2" fill="#eef0fa" opacity="0.75"/>
<rect x="46" y="35.5" width="5.2" height="5.2" fill="#eef0fa" opacity="0.75"/>
<rect x="53" y="35.5" width="5.2" height="5.2" fill="#eef0fa" opacity="0.75"/>
<rect x="60" y="35.5" width="5.2" height="5.2" fill="#eef0fa" opacity="0.75"/>
<rect x="67" y="35.5" width="5.2" height="5.2" fill="#eef0fa" opacity="0.75"/>
<rect x="74" y="35.5" width="5.2" height="5.2" fill="#eef0fa" opacity="0.75"/>
<rect x="81" y="35.5" width="5.2" height="5.2" fill="#eef0fa" opacity="0.75"/>
<rect x="88" y="35.5" width="5.2" height="5.2" fill="#eef0fa" opacity="0.75"/>
<rect x="95" y="35.5" width="5.2" height="5.2" fill="#eef0fa" opacity="0.75"/>
<rect x="102" y="35.5" width="5.2" height="5.2" fill="#eef0fa" opacity="0.75"/>
<rect x="109" y="35.5" width="5.2" height="5.2" fill="#eef0fa" opacity="0.75"/>
<rect x="116" y="35.5" width="5.2" height="5.2" fill="#eef0fa" opacity="0.75"/>
<rect x="123" y="35.5" width="5.2" height="5.2" fill="#eef0fa" opacity="0.75"/>
<rect x="130" y="35.5" width="5.2" height="5.2" fill="#eef0fa" opacity="0.75"/>
<rect x="137" y="35.5" width="5.2" height="5.2" fill="#eef0fa" opacity="0.75"/>
<rect x="144" y="35.5" width="5.2" height="5.2" fill="#eef0fa" opacity="0.75"/>
<rect x="151" y="35.5" width="5.2" height="5.2" fill="#eef0fa" opacity="0.75"/>
<rect x="40" y="45" width="5.5" height="5.5" fill="#e8ecfa" opacity="0.45"/>
<rect x="48" y="45" width="5.5" height="5.5" fill="#e8ecfa" opacity="0.45"/>
<rect x="56" y="45" width="5.5" height="5.5" fill="#e8ecfa" opacity="0.45"/>
<rect x="64" y="45" width="5.5" height="5.5" fill="#e8ecfa" opacity="0.45"/>
<rect x="72" y="45" width="5.5" height="5.5" fill="#e8ecfa" opacity="0.45"/>
<rect x="80" y="45" width="5.5" height="5.5" fill="#e8ecfa" opacity="0.45"/>
<rect x="88" y="45" width="5.5" height="5.5" fill="#e8ecfa" opacity="0.45"/>
<rect x="96" y="45" width="5.5" height="5.5" fill="#e8ecfa" opacity="0.45"/>
<rect x="104" y="45" width="5.5" height="5.5" fill="#e8ecfa" opacity="0.45"/>
<rect x="112" y="45" width="5.5" height="5.5" fill="#e8ecfa" opacity="0.45"/>
<path d="M-2 90 V80 L6 78 L10 74 L16 76 L22 73 L30 78 L34 90 Z" fill="#b77a62" opacity="0.8"/>
<rect x="-2" y="89" width="159" height="26" fill="#7e6056"/><rect x="-2" y="89" width="159" height="2" fill="#b0928a"/>
<rect x="-2" y="105" width="159" height="10" fill="#5e463e"/>
<path d="M137 84 Q146 80 155 81 V115 H139 Z" fill="#1e1e20"/>
<path d="M18.5 53 Q28 49.5 37.5 53 L38.0 73 H18.0 Z" fill="#17171b"/>
<rect x="26.2" y="47" width="3.6" height="4" fill="#c9a088"/>
<ellipse cx="28" cy="44" rx="4.1" ry="4.8" fill="#d6b09a"/><path d="M23.6 43.5 Q23.6 38.2 28 38.2 Q32.4 38.2 32.4 43.5 Q28 40.8 23.6 43.5 Z" fill="#1a1414"/>
<rect x="21.5" y="72.5" width="13" height="38" fill="#19191c"/>
<rect x="22" y="110" width="12" height="2.5" fill="#d8d8d8"/>
<path d="M39.5 58 Q47.5 54.5 55.5 58 L56.0 73 H39.0 Z" fill="#1d1d26"/>
<rect x="45.7" y="52" width="3.6" height="4" fill="#c9a088"/>
<ellipse cx="47.5" cy="49" rx="4.1" ry="4.8" fill="#d6b09a"/><path d="M43.1 48.5 Q43.1 43.2 47.5 43.2 Q51.9 43.2 51.9 48.5 Q47.5 45.8 43.1 48.5 Z" fill="#1a1414"/>
<rect x="41.0" y="72.5" width="13" height="10" fill="#5d6f90"/><rect x="42.5" y="82.5" width="10" height="27" fill="#dcbaa2"/>
<rect x="41.5" y="110" width="12" height="2.5" fill="#d8d8d8"/>
<path d="M52.0 59 Q61.5 55.5 71.0 59 L71.5 73 H51.5 Z" fill="#eeece8"/>
<rect x="59.7" y="53" width="3.6" height="4" fill="#c9a088"/>
<ellipse cx="61.5" cy="50" rx="4.1" ry="4.8" fill="#d6b09a"/><path d="M57.1 49.5 Q57.1 44.2 61.5 44.2 Q65.9 44.2 65.9 49.5 Q61.5 46.8 57.1 49.5 Z" fill="#1a1414"/>
<rect x="55.0" y="72.5" width="13" height="38" fill="#19191c"/>
<path d="M59.0 57 L61.5 66 L64.0 57" stroke="#333" stroke-width="0.6" fill="none"/>
<rect x="55.5" y="110" width="12" height="2.5" fill="#d8d8d8"/>
<path d="M71.5 53 Q81 49.5 90.5 53 L91.0 73 H71.0 Z" fill="#18181c"/>
<rect x="79.2" y="47" width="3.6" height="4" fill="#c9a088"/>
<ellipse cx="81" cy="44" rx="4.1" ry="4.8" fill="#d6b09a"/><path d="M76.6 43.5 Q76.6 38.2 81 38.2 Q85.4 38.2 85.4 43.5 Q81 40.8 76.6 43.5 Z" fill="#1a1414"/>
<rect x="74" y="72.5" width="14" height="30" fill="#b9a486"/><rect x="75.5" y="102.5" width="11" height="8" fill="#caa08a"/>
<rect x="75" y="110" width="12" height="2.5" fill="#d8d8d8"/>
<path d="M91.0 50.5 Q100.5 47.0 110.0 50.5 L110.5 73 H90.5 Z" fill="#f1efea"/>
<rect x="98.7" y="44.5" width="3.6" height="4" fill="#c9a088"/>
<ellipse cx="100.5" cy="41.5" rx="4.1" ry="4.8" fill="#d6b09a"/><path d="M96.1 41.0 Q96.1 35.7 100.5 35.7 Q104.9 35.7 104.9 41.0 Q100.5 38.3 96.1 41.0 Z" fill="#1a1414"/>
<rect x="94.0" y="72.5" width="13" height="38" fill="#19191c"/>
<path d="M98.0 48.5 L100.5 57.5 L103.0 48.5" stroke="#333" stroke-width="0.6" fill="none"/>
<rect x="94.5" y="110" width="12" height="2.5" fill="#d8d8d8"/>
<path d="M112.5 50.5 Q122 47.0 131.5 50.5 L132.0 73 H112.0 Z" fill="#efede8"/>
<rect x="120.2" y="44.5" width="3.6" height="4" fill="#c9a088"/>
<ellipse cx="122" cy="41.5" rx="4.1" ry="4.8" fill="#d6b09a"/><path d="M117.6 41.0 Q117.6 35.7 122 35.7 Q126.4 35.7 126.4 41.0 Q122 38.3 117.6 41.0 Z" fill="#1a1414"/>
<rect x="115.5" y="72.5" width="13" height="38" fill="#19191c"/>
<path d="M119.5 48.5 L122 57.5 L124.5 48.5" stroke="#333" stroke-width="0.6" fill="none"/>
<rect x="116" y="110" width="12" height="2.5" fill="#d8d8d8"/>
<rect x="67" y="63" width="27.5" height="19" fill="#e4573f"/><rect x="74" y="72.5" width="14" height="3.4" fill="#f6c8a8"/><rect x="77" y="66" width="8" height="2" fill="#f8d0b0"/>
</g></svg></g>
<g transform="translate(3.4,160.2)">
<rect x="0" y="0" width="91.5" height="123" fill="#9e9eb0"/>
<rect x="2.2" y="2.2" width="87.1" height="118.6" fill="none" stroke="#c4c4d2" stroke-width="1.2" stroke-dasharray="2 2"/>
<rect x="6" y="6" width="79.5" height="111" fill="#f9f9fb"/>
<rect x="7.5" y="7.5" width="76.5" height="108" fill="none" stroke="#d4d4de" stroke-width="0.6"/>
<path d="M8 103 Q18 97 28 104 Q40 111 52 103 Q66 96 83.5 106 V115 H8 Z" fill="#e2d6ec"/>
<rect x="38.75" y="0.5" width="14" height="11" fill="#eeeef4"/><path d="M45.75 2.5 L49.95 6.3 L45.75 10 L41.55 6.3 Z" fill="none" stroke="#666" stroke-width="1"/>
<rect x="22.75" y="15.5" width="46" height="3" fill="#80809a"/>
<rect x="22.75" y="20.5" width="46" height="1" fill="#bbb"/>
<rect x="18.4" y="31.8" width="16.6" height="21.6" fill="#3d95e6"/><circle cx="26.7" cy="40" r="3.6" fill="#ecd8cc"/><path d="M26.7 36.2 Q22.6 36.2 22.9 40.2 L23.2 38.6 Q26.7 37.6 30.2 38.6 L30.5 40.2 Q30.8 36.2 26.7 36.2Z" fill="#222"/><path d="M19.4 53.4 Q19.4 45.5 26.7 45.5 Q34 45.5 34 53.4 Z" fill="#2a2a35"/>
<rect x="42" y="38" width="10" height="1" fill="#a0a0a0"/>
<rect x="42" y="41" width="24" height="1" fill="#a0a0a0"/>
<rect x="42" y="46" width="26" height="1" fill="#a0a0a0"/>
<rect x="14" y="57" width="24" height="1" fill="#a0a0a0"/>
<rect x="42" y="57" width="28" height="1" fill="#a0a0a0"/>
<rect x="48" y="60" width="22" height="1" fill="#a0a0a0"/>
<rect x="48" y="63" width="18" height="1" fill="#a0a0a0"/>
<rect x="14" y="74" width="40" height="1" fill="#a0a0a0"/>
<rect x="14" y="85" width="10" height="1" fill="#a0a0a0"/>
<rect x="14" y="99" width="14" height="1" fill="#a0a0a0"/>
<rect x="42" y="99" width="16" height="1" fill="#a0a0a0"/>
<path d="M44 92 L47 84 Q52 82 53 88 Q55 83 58 87 Q61 83 64 86 M47 84 Q50 80 56 81" fill="none" stroke="#333" stroke-width="1.1"/>
<circle cx="62" cy="106" r="9" fill="none" stroke="#e99" stroke-width="0.9"/><path d="M59 107 H65 M62 103 V110" stroke="#e66" stroke-width="0.9"/>
</g>
<g transform="translate(102.2,158.6)">
<rect x="0" y="0" width="92.5" height="125.2" fill="#82859e"/>
<rect x="2.5" y="2.5" width="87.5" height="120.2" fill="none" stroke="#e2e2ec" stroke-width="1.7" stroke-dasharray="1.5 1.3"/>
<rect x="4.6" y="4.6" width="83.3" height="116.0" fill="#fdfdfd"/>
<rect x="6" y="6" width="80.5" height="113.2" fill="none" stroke="#c4c6d6" stroke-width="0.5"/>
<rect x="11.25" y="17" width="70" height="2.6" fill="#555"/>
<rect x="22.25" y="21.5" width="48" height="1" fill="#c4c4c4"/>
<text x="19.80" y="38.00" font-size="14.49" fill="#dba886" font-weight="normal" textLength="54.35" lengthAdjust="spacing" font-family="Liberation Sans" >获奖证书</text>
<rect x="27.25" y="40.5" width="38" height="1" fill="#eed6c4"/>
<circle cx="36.25" cy="50" r="2.3" fill="none" stroke="#c55" stroke-width="0.9"/><rect x="33.25" y="54.5" width="6" height="0.9" fill="#999"/>
<rect x="53.25" y="46.5" width="7" height="7" rx="1" fill="#d83a3a"/>
<rect x="35.75" y="64" width="21" height="3.2" fill="#333"/>
<rect x="14" y="75" width="60" height="1.2" fill="#aaa"/>
<rect x="14" y="79" width="38" height="1.2" fill="#aaa"/>
<rect x="14" y="83" width="32" height="1.2" fill="#aaa"/>
<rect x="14" y="87.5" width="26" height="1.2" fill="#aaa"/>
<rect x="14" y="92.5" width="28" height="1.2" fill="#aaa"/>
<rect x="14" y="97.5" width="26" height="1.2" fill="#aaa"/>
<circle cx="66.6" cy="102.664" r="8" fill="none" stroke="#e99" stroke-width="0.9"/><path d="M63.599999999999994 103.664 H69.6 M66.6 100.664 V105.664" stroke="#e77" stroke-width="0.8"/>
<rect x="14" y="106.42" width="55.5" height="0.8" fill="#bbb"/>
</g>
<g transform="translate(201.4,158.9)">
<rect x="0" y="0" width="90.1" height="124.6" fill="#82859e"/>
<rect x="2.5" y="2.5" width="85.1" height="119.6" fill="none" stroke="#e2e2ec" stroke-width="1.7" stroke-dasharray="1.5 1.3"/>
<rect x="4.6" y="4.6" width="80.89999999999999" height="115.39999999999999" fill="#fdfdfd"/>
<rect x="6" y="6" width="78.1" height="112.6" fill="none" stroke="#c4c6d6" stroke-width="0.5"/>
<rect x="10.049999999999997" y="17" width="70" height="2.6" fill="#555"/>
<rect x="21.049999999999997" y="21.5" width="48" height="1" fill="#c4c4c4"/>
<text x="18.60" y="38.00" font-size="14.49" fill="#dba886" font-weight="normal" textLength="54.35" lengthAdjust="spacing" font-family="Liberation Sans" >获奖证书</text>
<rect x="26.049999999999997" y="40.5" width="38" height="1" fill="#eed6c4"/>
<circle cx="35.05" cy="50" r="2.3" fill="none" stroke="#c55" stroke-width="0.9"/><rect x="32.05" y="54.5" width="6" height="0.9" fill="#999"/>
<rect x="52.05" y="46.5" width="7" height="7" rx="1" fill="#d83a3a"/>
<rect x="34.55" y="64" width="21" height="3.2" fill="#333"/>
<rect x="14" y="75" width="60" height="1.2" fill="#aaa"/>
<rect x="14" y="79" width="38" height="1.2" fill="#aaa"/>
<rect x="14" y="83" width="32" height="1.2" fill="#aaa"/>
<rect x="14" y="87.5" width="26" height="1.2" fill="#aaa"/>
<rect x="14" y="92.5" width="28" height="1.2" fill="#aaa"/>
<rect x="14" y="97.5" width="26" height="1.2" fill="#aaa"/>
<circle cx="64.872" cy="102.17199999999998" r="8" fill="none" stroke="#e99" stroke-width="0.9"/><path d="M61.872 103.17199999999998 H67.872 M64.872 100.17199999999998 V105.17199999999998" stroke="#e77" stroke-width="0.8"/>
<rect x="14" y="105.91" width="54.059999999999995" height="0.8" fill="#bbb"/>
</g>
<g transform="translate(297.7,159.2)">
<rect x="0" y="0" width="93.3" height="124.8" fill="#8f93bb"/>
<rect x="2.5" y="2.5" width="88.3" height="119.8" fill="none" stroke="#e6e8f4" stroke-width="1.7" stroke-dasharray="1.5 1.3"/>
<rect x="4.6" y="4.6" width="84.1" height="115.6" fill="#fdfdfd"/>
<rect x="6" y="6" width="81.3" height="112.8" fill="none" stroke="#c4c6d6" stroke-width="0.5"/>
<rect x="11.649999999999999" y="17" width="70" height="2.6" fill="#555"/>
<rect x="22.65" y="21.5" width="48" height="1" fill="#c4c4c4"/>
<text x="20.20" y="38.00" font-size="14.49" fill="#dba886" font-weight="normal" textLength="54.35" lengthAdjust="spacing" font-family="Liberation Sans" >获奖证书</text>
<rect x="27.65" y="40.5" width="38" height="1" fill="#eed6c4"/>
<circle cx="36.65" cy="50" r="2.3" fill="none" stroke="#c55" stroke-width="0.9"/><rect x="33.65" y="54.5" width="6" height="0.9" fill="#999"/>
<rect x="53.65" y="46.5" width="7" height="7" rx="1" fill="#d83a3a"/>
<rect x="29.65" y="64" width="34" height="3.2" fill="#333"/>
<rect x="14" y="75" width="60" height="1.2" fill="#aaa"/>
<rect x="14" y="79" width="38" height="1.2" fill="#aaa"/>
<rect x="14" y="83" width="32" height="1.2" fill="#aaa"/>
<rect x="14" y="87.5" width="26" height="1.2" fill="#aaa"/>
<rect x="14" y="92.5" width="28" height="1.2" fill="#aaa"/>
<rect x="14" y="97.5" width="26" height="1.2" fill="#aaa"/>
<circle cx="67.176" cy="102.336" r="8" fill="none" stroke="#e99" stroke-width="0.9"/><path d="M64.176 103.336 H70.176 M67.176 100.336 V105.336" stroke="#e77" stroke-width="0.8"/>
<rect x="14" y="106.08" width="55.98" height="0.8" fill="#bbb"/>
</g>
</g>
<g id="s4">
<rect x="0" y="0" width="396" height="297" fill="#fff"/>
<rect x="0" y="0" width="396" height="26" fill="url(#hdr)"/>
<rect x="0" y="25.7" width="396" height="9.8" fill="#d60606"/>
<rect x="0" y="25.7" width="396" height="1.6" fill="#ff2a1a"/>
<rect x="0" y="35.3" width="396" height="1.4" fill="#f2c0c0"/>
<text x="15" y="34.5" font-size="10.5" fill="#c20808" font-weight="bold" textLength="196" lengthAdjust="spacingAndGlyphs" font-family="Liberation Sans">CHANGCHUN  UNIVERSITY  OF  TECHNOLOGY</text>
<circle cx="18.5" cy="13.2" r="6.6" fill="#f3e6e0"/><circle cx="18.5" cy="13.2" r="5" fill="none" stroke="#8a1a1a" stroke-width="0.6"/><path d="M14.5 11 L18.5 17 L22.5 11 L20.5 12.5 L18.5 15 L16.5 12.5 Z" fill="#9a0f0f"/>
<text x="27.12" y="17.00" font-size="13.77" fill="#f4ecec" font-weight="bold" textLength="67.63" lengthAdjust="spacing" font-family="Liberation Sans" stroke="#f4ecec" stroke-width="0.9">长春工业大学</text>
<rect x="29" y="19.5" width="62" height="0.8" fill="#d9a5a5"/>
<text x="141.83" y="23.00" font-size="21.74" fill="#f7e81a" font-weight="bold" textLength="96.52" lengthAdjust="spacing" font-family="Liberation Sans" stroke="#f7e81a" stroke-width="1.3">专业负责人</text>
<rect x="36" y="45" width="7" height="9" fill="#c03060"/>
<rect x="47" y="46" width="105" height="8" fill="#333"/>
<rect x="36" y="58" width="173" height="2.5" fill="#c0407a"/>
<rect x="36" y="139" width="7" height="9" fill="#c03060"/>
<rect x="47" y="140" width="105" height="8" fill="#333"/>
<rect x="36" y="152" width="180" height="2.5" fill="#c0407a"/>
<rect x="36" y="72" width="210" height="4" fill="#b5b5b5"/>
<rect x="36" y="84" width="150" height="4" fill="#b5b5b5"/>
<rect x="36" y="96" width="260" height="4" fill="#b5b5b5"/>
<rect x="36" y="108" width="240" height="4" fill="#b5b5b5"/>
<rect x="36" y="120" width="255" height="4" fill="#b5b5b5"/>
<rect x="36" y="173" width="220" height="4" fill="#b5b5b5"/>
<rect x="36" y="185" width="120" height="4" fill="#b5b5b5"/>
<rect x="36" y="197" width="150" height="4" fill="#b5b5b5"/>
<rect x="36" y="209" width="330" height="4" fill="#b5b5b5"/>
<rect x="36" y="221" width="340" height="4" fill="#b5b5b5"/>
<rect x="36" y="233" width="300" height="4" fill="#b5b5b5"/>
<rect x="36" y="245" width="200" height="4" fill="#b5b5b5"/>
</g>
<g id="s5">
<rect x="0" y="0" width="396" height="297" fill="#fff"/>
<rect x="0" y="0" width="396" height="26" fill="url(#hdr)"/>
<rect x="0" y="25.7" width="396" height="9.8" fill="#d60606"/>
<rect x="0" y="25.7" width="396" height="1.6" fill="#ff2a1a"/>
<rect x="0" y="35.3" width="396" height="1.4" fill="#f2c0c0"/>
<text x="15" y="34.5" font-size="10.5" fill="#c20808" font-weight="bold" textLength="196" lengthAdjust="spacingAndGlyphs" font-family="Liberation Sans">CHANGCHUN  UNIVERSITY  OF  TECHNOLOGY</text>
<circle cx="18.5" cy="13.2" r="6.6" fill="#f3e6e0"/><circle cx="18.5" cy="13.2" r="5" fill="none" stroke="#8a1a1a" stroke-width="0.6"/><path d="M14.5 11 L18.5 17 L22.5 11 L20.5 12.5 L18.5 15 L16.5 12.5 Z" fill="#9a0f0f"/>
<text x="27.12" y="17.00" font-size="13.77" fill="#f4ecec" font-weight="bold" textLength="67.63" lengthAdjust="spacing" font-family="Liberation Sans" stroke="#f4ecec" stroke-width="0.9">长春工业大学</text>
<rect x="29" y="19.5" width="62" height="0.8" fill="#d9a5a5"/>
<text x="157.83" y="23.00" font-size="21.74" fill="#f7e81a" font-weight="bold" textLength="64.52" lengthAdjust="spacing" font-family="Liberation Sans" stroke="#f7e81a" stroke-width="1.3">师资队伍</text>
<rect x="8" y="60" width="9" height="8" fill="none" stroke="#333" stroke-width="1.6"/>
<rect x="21" y="60" width="9" height="8" fill="none" stroke="#333" stroke-width="1.6"/>
<rect x="34" y="60" width="9" height="8" fill="none" stroke="#333" stroke-width="1.6"/>
<rect x="47" y="60" width="9" height="8" fill="none" stroke="#333" stroke-width="1.6"/>
<rect x="60" y="60" width="9" height="8" fill="none" stroke="#333" stroke-width="1.6"/>
<rect x="73" y="60" width="9" height="8" fill="none" stroke="#333" stroke-width="1.6"/>
<rect x="86" y="60" width="9" height="8" fill="none" stroke="#333" stroke-width="1.6"/>
<rect x="99" y="60" width="9" height="8" fill="none" stroke="#333" stroke-width="1.6"/>
<rect x="112" y="60" width="9" height="8" fill="none" stroke="#333" stroke-width="1.6"/>
<rect x="125" y="60" width="9" height="8" fill="none" stroke="#333" stroke-width="1.6"/>
<rect x="138" y="60" width="9" height="8" fill="none" stroke="#333" stroke-width="1.6"/>
<rect x="151" y="60" width="9" height="8" fill="none" stroke="#333" stroke-width="1.6"/>
<rect x="164" y="60" width="9" height="8" fill="none" stroke="#333" stroke-width="1.6"/>
<rect x="177" y="60" width="9" height="8" fill="none" stroke="#333" stroke-width="1.6"/>
<rect x="190" y="60" width="9" height="8" fill="none" stroke="#333" stroke-width="1.6"/>
<rect x="203" y="60" width="9" height="8" fill="none" stroke="#333" stroke-width="1.6"/>
<rect x="216" y="60" width="9" height="8" fill="none" stroke="#333" stroke-width="1.6"/>
<rect x="229" y="60" width="9" height="8" fill="none" stroke="#333" stroke-width="1.6"/>
<rect x="242" y="60" width="9" height="8" fill="none" stroke="#333" stroke-width="1.6"/>
<rect x="255" y="60" width="9" height="8" fill="none" stroke="#333" stroke-width="1.6"/>
<rect x="8" y="85" width="9" height="8" fill="none" stroke="#333" stroke-width="1.6"/>
<rect x="21" y="85" width="9" height="8" fill="none" stroke="#333" stroke-width="1.6"/>
<rect x="34" y="85" width="9" height="8" fill="none" stroke="#333" stroke-width="1.6"/>
<rect x="47" y="85" width="9" height="8" fill="none" stroke="#333" stroke-width="1.6"/>
<rect x="60" y="85" width="9" height="8" fill="none" stroke="#333" stroke-width="1.6"/>
<rect x="73" y="85" width="9" height="8" fill="none" stroke="#333" stroke-width="1.6"/>
<rect x="86" y="85" width="9" height="8" fill="none" stroke="#333" stroke-width="1.6"/>
<rect x="99" y="85" width="9" height="8" fill="none" stroke="#333" stroke-width="1.6"/>
<rect x="112" y="85" width="9" height="8" fill="none" stroke="#333" stroke-width="1.6"/>
<rect x="125" y="85" width="9" height="8" fill="none" stroke="#333" stroke-width="1.6"/>
<rect x="138" y="85" width="9" height="8" fill="none" stroke="#333" stroke-width="1.6"/>
<rect x="151" y="85" width="9" height="8" fill="none" stroke="#333" stroke-width="1.6"/>
<rect x="164" y="85" width="9" height="8" fill="none" stroke="#333" stroke-width="1.6"/>
<rect x="177" y="85" width="9" height="8" fill="none" stroke="#333" stroke-width="1.6"/>
<rect x="190" y="85" width="9" height="8" fill="none" stroke="#333" stroke-width="1.6"/>
<rect x="203" y="85" width="9" height="8" fill="none" stroke="#333" stroke-width="1.6"/>
<rect x="216" y="85" width="9" height="8" fill="none" stroke="#333" stroke-width="1.6"/>
<rect x="229" y="85" width="9" height="8" fill="none" stroke="#333" stroke-width="1.6"/>
<rect x="242" y="85" width="9" height="8" fill="none" stroke="#333" stroke-width="1.6"/>
<rect x="255" y="85" width="9" height="8" fill="none" stroke="#333" stroke-width="1.6"/>
<rect x="268" y="85" width="9" height="8" fill="none" stroke="#333" stroke-width="1.6"/>
<rect x="281" y="85" width="9" height="8" fill="none" stroke="#333" stroke-width="1.6"/>
<rect x="294" y="85" width="9" height="8" fill="none" stroke="#333" stroke-width="1.6"/>
<rect x="307" y="85" width="9" height="8" fill="none" stroke="#333" stroke-width="1.6"/>
<rect x="320" y="85" width="9" height="8" fill="none" stroke="#333" stroke-width="1.6"/>
<rect x="333" y="85" width="9" height="8" fill="none" stroke="#333" stroke-width="1.6"/>
<rect x="346" y="85" width="9" height="8" fill="none" stroke="#333" stroke-width="1.6"/>
<rect x="359" y="85" width="9" height="8" fill="none" stroke="#333" stroke-width="1.6"/>
<rect x="372" y="85" width="9" height="8" fill="none" stroke="#333" stroke-width="1.6"/>
<rect x="385" y="85" width="9" height="8" fill="none" stroke="#333" stroke-width="1.6"/>
<rect x="54" y="103" width="292" height="172" fill="#7a3c3c"/>
<rect x="57" y="106.0" width="13" height="23" fill="#c4bcbc"/><rect x="59.5" y="111.0" width="8" height="14" fill="#5a5050"/>
<rect x="73" y="106.0" width="13" height="23" fill="#c4bcbc"/><rect x="75.5" y="111.0" width="8" height="14" fill="#5a5050"/>
<rect x="89" y="106.0" width="13" height="23" fill="#c4bcbc"/><rect x="91.5" y="111.0" width="8" height="14" fill="#5a5050"/>
<rect x="105" y="106.0" width="13" height="23" fill="#c4bcbc"/><rect x="107.5" y="111.0" width="8" height="14" fill="#5a5050"/>
<rect x="121" y="106.0" width="13" height="23" fill="#c4bcbc"/><rect x="123.5" y="111.0" width="8" height="14" fill="#5a5050"/>
<rect x="137" y="106.0" width="13" height="23" fill="#c4bcbc"/><rect x="139.5" y="111.0" width="8" height="14" fill="#5a5050"/>
<rect x="153" y="106.0" width="13" height="23" fill="#c4bcbc"/><rect x="155.5" y="111.0" width="8" height="14" fill="#5a5050"/>
<rect x="169" y="106.0" width="13" height="23" fill="#c4bcbc"/><rect x="171.5" y="111.0" width="8" height="14" fill="#5a5050"/>
<rect x="185" y="106.0" width="13" height="23" fill="#c4bcbc"/><rect x="187.5" y="111.0" width="8" height="14" fill="#5a5050"/>
<rect x="201" y="106.0" width="13" height="23" fill="#c4bcbc"/><rect x="203.5" y="111.0" width="8" height="14" fill="#5a5050"/>
<rect x="217" y="106.0" width="13" height="23" fill="#c4bcbc"/><rect x="219.5" y="111.0" width="8" height="14" fill="#5a5050"/>
<rect x="233" y="106.0" width="13" height="23" fill="#c4bcbc"/><rect x="235.5" y="111.0" width="8" height="14" fill="#5a5050"/>
<rect x="249" y="106.0" width="13" height="23" fill="#c4bcbc"/><rect x="251.5" y="111.0" width="8" height="14" fill="#5a5050"/>
<rect x="265" y="106.0" width="13" height="23" fill="#c4bcbc"/><rect x="267.5" y="111.0" width="8" height="14" fill="#5a5050"/>
<rect x="281" y="106.0" width="13" height="23" fill="#c4bcbc"/><rect x="283.5" y="111.0" width="8" height="14" fill="#5a5050"/>
<rect x="297" y="106.0" width="13" height="23" fill="#c4bcbc"/><rect x="299.5" y="111.0" width="8" height="14" fill="#5a5050"/>
<rect x="313" y="106.0" width="13" height="23" fill="#c4bcbc"/><rect x="315.5" y="111.0" width="8" height="14" fill="#5a5050"/>
<rect x="329" y="106.0" width="13" height="23" fill="#c4bcbc"/><rect x="331.5" y="111.0" width="8" height="14" fill="#5a5050"/>
<rect x="57" y="134.3" width="13" height="23" fill="#c4bcbc"/><rect x="59.5" y="139.3" width="8" height="14" fill="#5a5050"/>
<rect x="73" y="134.3" width="13" height="23" fill="#c4bcbc"/><rect x="75.5" y="139.3" width="8" height="14" fill="#5a5050"/>
<rect x="89" y="134.3" width="13" height="23" fill="#c4bcbc"/><rect x="91.5" y="139.3" width="8" height="14" fill="#5a5050"/>
<rect x="105" y="134.3" width="13" height="23" fill="#c4bcbc"/><rect x="107.5" y="139.3" width="8" height="14" fill="#5a5050"/>
<rect x="121" y="134.3" width="13" height="23" fill="#c4bcbc"/><rect x="123.5" y="139.3" width="8" height="14" fill="#5a5050"/>
<rect x="137" y="134.3" width="13" height="23" fill="#c4bcbc"/><rect x="139.5" y="139.3" width="8" height="14" fill="#5a5050"/>
<rect x="153" y="134.3" width="13" height="23" fill="#c4bcbc"/><rect x="155.5" y="139.3" width="8" height="14" fill="#5a5050"/>
<rect x="169" y="134.3" width="13" height="23" fill="#c4bcbc"/><rect x="171.5" y="139.3" width="8" height="14" fill="#5a5050"/>
<rect x="185" y="134.3" width="13" height="23" fill="#c4bcbc"/><rect x="187.5" y="139.3" width="8" height="14" fill="#5a5050"/>
<rect x="201" y="134.3" width="13" height="23" fill="#c4bcbc"/><rect x="203.5" y="139.3" width="8" height="14" fill="#5a5050"/>
<rect x="217" y="134.3" width="13" height="23" fill="#c4bcbc"/><rect x="219.5" y="139.3" width="8" height="14" fill="#5a5050"/>
<rect x="233" y="134.3" width="13" height="23" fill="#c4bcbc"/><rect x="235.5" y="139.3" width="8" height="14" fill="#5a5050"/>
<rect x="249" y="134.3" width="13" height="23" fill="#c4bcbc"/><rect x="251.5" y="139.3" width="8" height="14" fill="#5a5050"/>
<rect x="265" y="134.3" width="13" height="23" fill="#c4bcbc"/><rect x="267.5" y="139.3" width="8" height="14" fill="#5a5050"/>
<rect x="281" y="134.3" width="13" height="23" fill="#c4bcbc"/><rect x="283.5" y="139.3" width="8" height="14" fill="#5a5050"/>
<rect x="297" y="134.3" width="13" height="23" fill="#c4bcbc"/><rect x="299.5" y="139.3" width="8" height="14" fill="#5a5050"/>
<rect x="313" y="134.3" width="13" height="23" fill="#c4bcbc"/><rect x="315.5" y="139.3" width="8" height="14" fill="#5a5050"/>
<rect x="329" y="134.3" width="13" height="23" fill="#c4bcbc"/><rect x="331.5" y="139.3" width="8" height="14" fill="#5a5050"/>
<rect x="57" y="162.6" width="13" height="23" fill="#c4bcbc"/><rect x="59.5" y="167.6" width="8" height="14" fill="#5a5050"/>
<rect x="73" y="162.6" width="13" height="23" fill="#c4bcbc"/><rect x="75.5" y="167.6" width="8" height="14" fill="#5a5050"/>
<rect x="89" y="162.6" width="13" height="23" fill="#c4bcbc"/><rect x="91.5" y="167.6" width="8" height="14" fill="#5a5050"/>
<rect x="105" y="162.6" width="13" height="23" fill="#c4bcbc"/><rect x="107.5" y="167.6" width="8" height="14" fill="#5a5050"/>
<rect x="121" y="162.6" width="13" height="23" fill="#c4bcbc"/><rect x="123.5" y="167.6" width="8" height="14" fill="#5a5050"/>
<rect x="137" y="162.6" width="13" height="23" fill="#c4bcbc"/><rect x="139.5" y="167.6" width="8" height="14" fill="#5a5050"/>
<rect x="153" y="162.6" width="13" height="23" fill="#c4bcbc"/><rect x="155.5" y="167.6" width="8" height="14" fill="#5a5050"/>
<rect x="169" y="162.6" width="13" height="23" fill="#c4bcbc"/><rect x="171.5" y="167.6" width="8" height="14" fill="#5a5050"/>
<rect x="185" y="162.6" width="13" height="23" fill="#c4bcbc"/><rect x="187.5" y="167.6" width="8" height="14" fill="#5a5050"/>
<rect x="201" y="162.6" width="13" height="23" fill="#c4bcbc"/><rect x="203.5" y="167.6" width="8" height="14" fill="#5a5050"/>
<rect x="217" y="162.6" width="13" height="23" fill="#c4bcbc"/><rect x="219.5" y="167.6" width="8" height="14" fill="#5a5050"/>
<rect x="233" y="162.6" width="13" height="23" fill="#c4bcbc"/><rect x="235.5" y="167.6" width="8" height="14" fill="#5a5050"/>
<rect x="249" y="162.6" width="13" height="23" fill="#c4bcbc"/><rect x="251.5" y="167.6" width="8" height="14" fill="#5a5050"/>
<rect x="265" y="162.6" width="13" height="23" fill="#c4bcbc"/><rect x="267.5" y="167.6" width="8" height="14" fill="#5a5050"/>
<rect x="281" y="162.6" width="13" height="23" fill="#c4bcbc"/><rect x="283.5" y="167.6" width="8" height="14" fill="#5a5050"/>
<rect x="297" y="162.6" width="13" height="23" fill="#c4bcbc"/><rect x="299.5" y="167.6" width="8" height="14" fill="#5a5050"/>
<rect x="313" y="162.6" width="13" height="23" fill="#c4bcbc"/><rect x="315.5" y="167.6" width="8" height="14" fill="#5a5050"/>
<rect x="329" y="162.6" width="13" height="23" fill="#c4bcbc"/><rect x="331.5" y="167.6" width="8" height="14" fill="#5a5050"/>
<rect x="57" y="190.9" width="13" height="23" fill="#c4bcbc"/><rect x="59.5" y="195.9" width="8" height="14" fill="#5a5050"/>
<rect x="73" y="190.9" width="13" height="23" fill="#c4bcbc"/><rect x="75.5" y="195.9" width="8" height="14" fill="#5a5050"/>
<rect x="89" y="190.9" width="13" height="23" fill="#c4bcbc"/><rect x="91.5" y="195.9" width="8" height="14" fill="#5a5050"/>
<rect x="105" y="190.9" width="13" height="23" fill="#c4bcbc"/><rect x="107.5" y="195.9" width="8" height="14" fill="#5a5050"/>
<rect x="121" y="190.9" width="13" height="23" fill="#c4bcbc"/><rect x="123.5" y="195.9" width="8" height="14" fill="#5a5050"/>
<rect x="137" y="190.9" width="13" height="23" fill="#c4bcbc"/><rect x="139.5" y="195.9" width="8" height="14" fill="#5a5050"/>
<rect x="153" y="190.9" width="13" height="23" fill="#c4bcbc"/><rect x="155.5" y="195.9" width="8" height="14" fill="#5a5050"/>
<rect x="169" y="190.9" width="13" height="23" fill="#c4bcbc"/><rect x="171.5" y="195.9" width="8" height="14" fill="#5a5050"/>
<rect x="185" y="190.9" width="13" height="23" fill="#c4bcbc"/><rect x="187.5" y="195.9" width="8" height="14" fill="#5a5050"/>
<rect x="201" y="190.9" width="13" height="23" fill="#c4bcbc"/><rect x="203.5" y="195.9" width="8" height="14" fill="#5a5050"/>
<rect x="217" y="190.9" width="13" height="23" fill="#c4bcbc"/><rect x="219.5" y="195.9" width="8" height="14" fill="#5a5050"/>
<rect x="233" y="190.9" width="13" height="23" fill="#c4bcbc"/><rect x="235.5" y="195.9" width="8" height="14" fill="#5a5050"/>
<rect x="249" y="190.9" width="13" height="23" fill="#c4bcbc"/><rect x="251.5" y="195.9" width="8" height="14" fill="#5a5050"/>
<rect x="265" y="190.9" width="13" height="23" fill="#c4bcbc"/><rect x="267.5" y="195.9" width="8" height="14" fill="#5a5050"/>
<rect x="281" y="190.9" width="13" height="23" fill="#c4bcbc"/><rect x="283.5" y="195.9" width="8" height="14" fill="#5a5050"/>
<rect x="297" y="190.9" width="13" height="23" fill="#c4bcbc"/><rect x="299.5" y="195.9" width="8" height="14" fill="#5a5050"/>
<rect x="313" y="190.9" width="13" height="23" fill="#c4bcbc"/><rect x="315.5" y="195.9" width="8" height="14" fill="#5a5050"/>
<rect x="329" y="190.9" width="13" height="23" fill="#c4bcbc"/><rect x="331.5" y="195.9" width="8" height="14" fill="#5a5050"/>
<rect x="57" y="219.2" width="13" height="23" fill="#c4bcbc"/><rect x="59.5" y="224.2" width="8" height="14" fill="#5a5050"/>
<rect x="73" y="219.2" width="13" height="23" fill="#c4bcbc"/><rect x="75.5" y="224.2" width="8" height="14" fill="#5a5050"/>
<rect x="89" y="219.2" width="13" height="23" fill="#c4bcbc"/><rect x="91.5" y="224.2" width="8" height="14" fill="#5a5050"/>
<rect x="105" y="219.2" width="13" height="23" fill="#c4bcbc"/><rect x="107.5" y="224.2" width="8" height="14" fill="#5a5050"/>
<rect x="121" y="219.2" width="13" height="23" fill="#c4bcbc"/><rect x="123.5" y="224.2" width="8" height="14" fill="#5a5050"/>
<rect x="137" y="219.2" width="13" height="23" fill="#c4bcbc"/><rect x="139.5" y="224.2" width="8" height="14" fill="#5a5050"/>
<rect x="153" y="219.2" width="13" height="23" fill="#c4bcbc"/><rect x="155.5" y="224.2" width="8" height="14" fill="#5a5050"/>
<rect x="169" y="219.2" width="13" height="23" fill="#c4bcbc"/><rect x="171.5" y="224.2" width="8" height="14" fill="#5a5050"/>
<rect x="185" y="219.2" width="13" height="23" fill="#c4bcbc"/><rect x="187.5" y="224.2" width="8" height="14" fill="#5a5050"/>
<rect x="201" y="219.2" width="13" height="23" fill="#c4bcbc"/><rect x="203.5" y="224.2" width="8" height="14" fill="#5a5050"/>
<rect x="217" y="219.2" width="13" height="23" fill="#c4bcbc"/><rect x="219.5" y="224.2" width="8" height="14" fill="#5a5050"/>
<rect x="233" y="219.2" width="13" height="23" fill="#c4bcbc"/><rect x="235.5" y="224.2" width="8" height="14" fill="#5a5050"/>
<rect x="249" y="219.2" width="13" height="23" fill="#c4bcbc"/><rect x="251.5" y="224.2" width="8" height="14" fill="#5a5050"/>
<rect x="265" y="219.2" width="13" height="23" fill="#c4bcbc"/><rect x="267.5" y="224.2" width="8" height="14" fill="#5a5050"/>
<rect x="281" y="219.2" width="13" height="23" fill="#c4bcbc"/><rect x="283.5" y="224.2" width="8" height="14" fill="#5a5050"/>
<rect x="297" y="219.2" width="13" height="23" fill="#c4bcbc"/><rect x="299.5" y="224.2" width="8" height="14" fill="#5a5050"/>
<rect x="313" y="219.2" width="13" height="23" fill="#c4bcbc"/><rect x="315.5" y="224.2" width="8" height="14" fill="#5a5050"/>
<rect x="329" y="219.2" width="13" height="23" fill="#c4bcbc"/><rect x="331.5" y="224.2" width="8" height="14" fill="#5a5050"/>
<rect x="57" y="247.5" width="13" height="23" fill="#c4bcbc"/><rect x="59.5" y="252.5" width="8" height="14" fill="#5a5050"/>
<rect x="73" y="247.5" width="13" height="23" fill="#c4bcbc"/><rect x="75.5" y="252.5" width="8" height="14" fill="#5a5050"/>
<rect x="89" y="247.5" width="13" height="23" fill="#c4bcbc"/><rect x="91.5" y="252.5" width="8" height="14" fill="#5a5050"/>
<rect x="105" y="247.5" width="13" height="23" fill="#c4bcbc"/><rect x="107.5" y="252.5" width="8" height="14" fill="#5a5050"/>
<rect x="121" y="247.5" width="13" height="23" fill="#c4bcbc"/><rect x="123.5" y="252.5" width="8" height="14" fill="#5a5050"/>
<rect x="137" y="247.5" width="13" height="23" fill="#c4bcbc"/><rect x="139.5" y="252.5" width="8" height="14" fill="#5a5050"/>
<rect x="153" y="247.5" width="13" height="23" fill="#c4bcbc"/><rect x="155.5" y="252.5" width="8" height="14" fill="#5a5050"/>
<rect x="169" y="247.5" width="13" height="23" fill="#c4bcbc"/><rect x="171.5" y="252.5" width="8" height="14" fill="#5a5050"/>
<rect x="185" y="247.5" width="13" height="23" fill="#c4bcbc"/><rect x="187.5" y="252.5" width="8" height="14" fill="#5a5050"/>
<rect x="201" y="247.5" width="13" height="23" fill="#c4bcbc"/><rect x="203.5" y="252.5" width="8" height="14" fill="#5a5050"/>
<rect x="217" y="247.5" width="13" height="23" fill="#c4bcbc"/><rect x="219.5" y="252.5" width="8" height="14" fill="#5a5050"/>
<rect x="233" y="247.5" width="13" height="23" fill="#c4bcbc"/><rect x="235.5" y="252.5" width="8" height="14" fill="#5a5050"/>
<rect x="249" y="247.5" width="13" height="23" fill="#c4bcbc"/><rect x="251.5" y="252.5" width="8" height="14" fill="#5a5050"/>
<rect x="265" y="247.5" width="13" height="23" fill="#c4bcbc"/><rect x="267.5" y="252.5" width="8" height="14" fill="#5a5050"/>
<rect x="281" y="247.5" width="13" height="23" fill="#c4bcbc"/><rect x="283.5" y="252.5" width="8" height="14" fill="#5a5050"/>
<rect x="297" y="247.5" width="13" height="23" fill="#c4bcbc"/><rect x="299.5" y="252.5" width="8" height="14" fill="#5a5050"/>
<rect x="313" y="247.5" width="13" height="23" fill="#c4bcbc"/><rect x="315.5" y="252.5" width="8" height="14" fill="#5a5050"/>
<rect x="329" y="247.5" width="13" height="23" fill="#c4bcbc"/><rect x="331.5" y="252.5" width="8" height="14" fill="#5a5050"/>
<rect x="230" y="248" width="116" height="27" fill="#8a3030" opacity="0.6"/>
<path d="M40 163 H380 M50 180 H70" stroke="#5050b0" stroke-width="2"/>
<rect x="160" y="280" width="40" height="2" fill="#888"/>
</g>
</defs>
<rect x="289" y="111.5" width="396" height="296.5" fill="none" stroke="#efefef" stroke-width="1"/>
<use href="#s6" transform="translate(289.4,112) scale(0.9975)"/>
<rect x="58.8" y="133" width="112.2" height="85" fill="#fff" stroke="#dcdcdc" stroke-width="1"/>
<use href="#s4" transform="translate(60.6,135.4) scale(0.27374)"/>
<rect x="58.8" y="228.5" width="112.2" height="85" fill="#fff" stroke="#dcdcdc" stroke-width="1"/>
<use href="#s5" transform="translate(60.6,230.9) scale(0.27374)"/>
<rect x="58.8" y="323.5" width="112.2" height="85" fill="#fff" stroke="#f0a060" stroke-width="1.6"/>
<use href="#s6" transform="translate(60.6,325.9) scale(0.27374)"/>
</svg>
</div></body></html>
